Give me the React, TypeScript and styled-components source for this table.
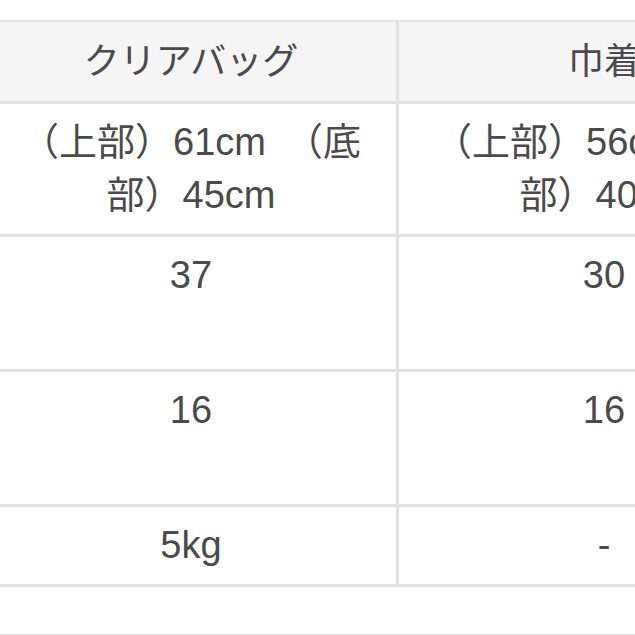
import React from 'react'
import styled, { createGlobalStyle } from 'styled-components'

const GlobalStyle = createGlobalStyle`
  html, body {
    margin: 0;
    padding: 0;
    background: #ffffff;
    overflow: hidden;
  }
  body {
    width: 635px;
    height: 635px;
  }
`

const Page = styled.div`
  width: 635px;
  height: 635px;
  overflow: hidden;
  padding-top: 20px;
  box-sizing: border-box;
`

const SpecTable = styled.div`
  width: 900px;
  margin-left: -14px;
  border-top: 2px solid #e2e2e2;
  font-family: "Liberation Sans", "Noto Sans CJK JP", sans-serif;
  font-size: 38px;
  line-height: 53px;
  color: #4a4a4a;
`

const Row = styled.div<{ head?: boolean; tall?: boolean }>`
  display: grid;
  grid-template-columns: 413px 413px;
  border-bottom: 3px solid #e2e2e2;
  background: ${props => (props.head ? '#f5f5f5' : '#ffffff')};
  min-height: ${props => (props.tall ? '132px' : '0')};
`

const Cell = styled.div<{ head?: boolean }>`
  box-sizing: border-box;
  padding: ${props => (props.head ? '13px 18px' : '12px 18px')};
  text-align: center;
  border-right: 3px solid #e2e2e2;
  font-size: ${props => (props.head ? '36px' : 'inherit')};
`

const BottomRule = styled.div`
  height: 2px;
  margin-top: 47px;
  background: #dedede;
`

interface SpecRow {
  left: string
  right: string
  tall?: boolean
}

const rows: SpecRow[] = [
  { left: '（上部）61cm　（底部）45cm', right: '（上部）56cm　（底部）40cm' },
  { left: '37', right: '30', tall: true },
  { left: '16', right: '16', tall: true },
  { left: '5kg', right: '-' }
]

export default function App() {
  return (
    <Page>
      <GlobalStyle />
      <SpecTable>
        <Row head>
          <Cell head>クリアバッグ</Cell>
          <Cell head>巾着</Cell>
        </Row>
        {rows.map((row, i) => (
          <Row key={i} tall={row.tall}>
            <Cell>{row.left}</Cell>
            <Cell>{row.right}</Cell>
          </Row>
        ))}
      </SpecTable>
      <BottomRule />
    </Page>
  )
}
